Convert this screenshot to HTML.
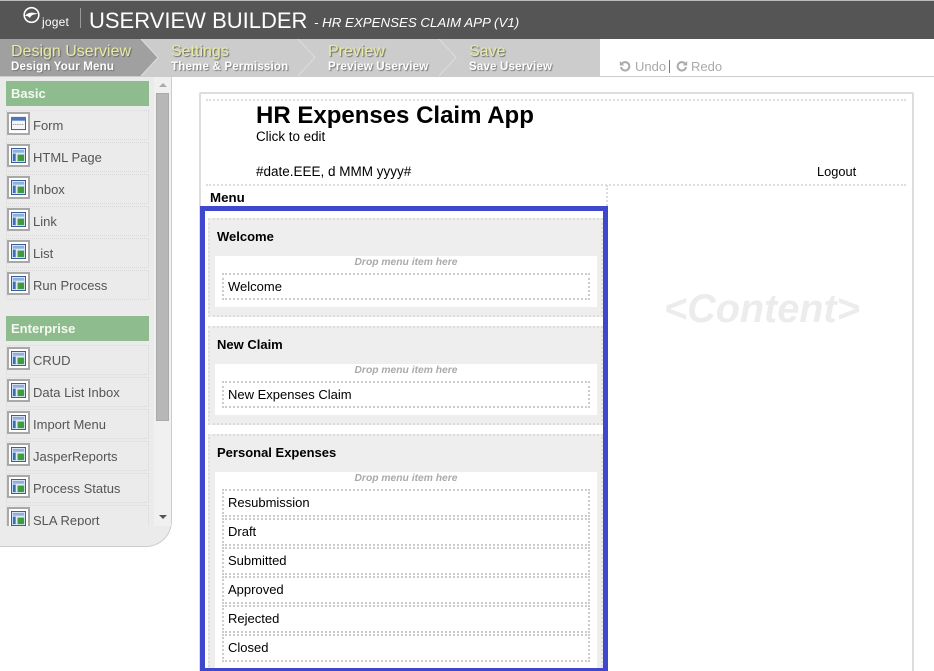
<!DOCTYPE html>
<html><head><meta charset="utf-8"><title>Userview Builder</title>
<style>
*{box-sizing:border-box}
html,body{margin:0;padding:0;background:#fff;width:934px;height:671px;overflow:hidden}
#w{position:relative;width:934px;height:671px;overflow:hidden;font-family:"Liberation Sans",Arial,sans-serif;color:#000;}
.a{position:absolute}
.t{position:absolute;white-space:nowrap}
.s1{position:absolute;top:42px;font-size:16px;line-height:20px;color:#e6eca0;text-shadow:1px 1px 1px #666;white-space:nowrap}
.s2{position:absolute;top:60px;font-size:11.5px;line-height:14px;font-weight:bold;color:#fff;text-shadow:1px 1px 1px #777;white-space:nowrap;letter-spacing:.2px}
.h{position:absolute;left:6px;width:143px;height:25px;background:#8fbc8f;color:#f4f8f0;font-weight:bold;font-size:13px;line-height:25px;padding-left:5px}
.i{position:absolute;left:6px;width:143px;height:30px;border:1px dotted #d8d8d8;}
.i span{position:absolute;left:26px;top:7px;font-size:13px;line-height:15px;color:#555;white-space:nowrap}
.ic{position:absolute;left:0;top:1px;width:23px;height:23px;border:2px solid #a8a8a8;background:#fff;}
.ic svg{position:absolute;left:2px;top:2px;display:block}
.sec{position:absolute;left:208px;width:395px;background:#eee;border:2px dotted #ddd}
.sec b{position:absolute;left:7px;top:9px;font-size:13px;line-height:15px;}
.in{position:absolute;left:215px;width:382px;background:#fff}
.dr{position:absolute;left:0;right:0;top:1px;text-align:center;font-size:10.3px;line-height:12px;font-weight:bold;font-style:italic;color:#aaa}
.m{position:absolute;left:222px;width:368px;height:27px;border:2px dotted #ccc;font-size:13px;line-height:23px;padding-left:4px}
</style></head><body>
<div id="w">

<svg width="0" height="0" style="position:absolute"><defs><g id="p"><rect x="3.500" y="3.500" width="15" height="15" fill="#dfe8f6" stroke="#2f5597"/><rect x="5" y="5" width="12" height="3" fill="#8fb0de"/><rect x="5" y="9" width="3" height="8" fill="#3d6fb5"/><rect x="10" y="10" width="7" height="7" fill="#3f9b3f"/></g></defs></svg>

<!-- header -->
<div class="a" style="left:0;top:0;width:934px;height:39px;background:#555;border-top:1px solid #bbb"></div>
<svg class="a" style="left:22px;top:6px" width="20" height="18" viewBox="0 0 20 18"><circle cx="9.500" cy="9" r="7.300" fill="none" stroke="#fff" stroke-width="1.600"/><path d="M3 10C6 6 11 6 16 8 12 8 9 9 8 12 6 10 5 10 3 10Z" fill="#fff"/></svg>
<div class="t" style="left:42px;top:15px;font-size:12px;line-height:14px;color:#fff;letter-spacing:.2px">joget</div>
<div class="a" style="left:80px;top:8px;width:1px;height:20px;background:#999"></div>
<div class="t" style="left:89px;top:7px;font-size:22px;line-height:28px;color:#fff">USERVIEW BUILDER</div>
<div class="t" style="left:314px;top:15px;font-size:13.3px;line-height:16px;font-style:italic;color:#fff">- HR EXPENSES CLAIM APP (V1)</div>

<!-- steps -->
<div class="a" style="left:0;top:39px;width:600px;height:37px;background:#ccc"></div>
<svg class="a" style="left:0;top:39px" width="600" height="37" viewBox="0 0 600 37">
<path d="M0 0H141L158 18.500L141 37H0Z" fill="#a0a0a0"/>
<path d="M141 0L158 18.500L141 37" fill="none" stroke="#ddd" stroke-width="1"/>
<path d="M298 0L315 18.500L298 37" fill="none" stroke="#ddd" stroke-width="1"/>
<path d="M439 0L456 18.500L439 37" fill="none" stroke="#ddd" stroke-width="1"/>
</svg>
<div class="a" style="left:0;top:76px;width:934px;height:1px;background:#ccc"></div>
<div class="s1" style="left:11px">Design Userview</div><div class="s2" style="left:11px">Design Your Menu</div>
<div class="s1" style="left:171px">Settings</div><div class="s2" style="left:171px">Theme &amp; Permission</div>
<div class="s1" style="left:328px">Preview</div><div class="s2" style="left:328px">Preview Userview</div>
<div class="s1" style="left:469px">Save</div><div class="s2" style="left:469px">Save Userview</div>

<svg class="a" style="left:619px;top:60px" width="12" height="12" viewBox="0 0 12 12"><path d="M3 3.500A4.200 4.200 0 1 1 2 7" fill="none" stroke="#aaa" stroke-width="2"/><path d="M.8 1V5.500H5.300Z" fill="#aaa"/></svg>
<div class="t" style="left:635px;top:59px;font-size:13px;line-height:15px;color:#aaa">Undo</div>
<div class="a" style="left:669px;top:60px;width:1px;height:13px;background:#a66"></div>
<svg class="a" style="left:676px;top:60px" width="12" height="12" viewBox="0 0 12 12"><path d="M9 3.500A4.200 4.200 0 1 0 10 7" fill="none" stroke="#aaa" stroke-width="2"/><path d="M11.200 1V5.500H6.700Z" fill="#aaa"/></svg>
<div class="t" style="left:691px;top:59px;font-size:13px;line-height:15px;color:#aaa">Redo</div>

<!-- sidebar -->
<div class="a" style="left:0;top:77px;width:172px;height:470px;background:#ebebeb;border-right:1px solid #ccc;border-bottom:1px solid #ccc;border-bottom-right-radius:26px"></div>
<div class="a" style="left:154px;top:77px;width:17px;height:449px;background:#f0f0f0"></div>
<div class="a" style="left:156px;top:93px;width:13px;height:328px;background:#b7b7b7;border:1px solid #aaa"></div>
<svg class="a" style="left:158px;top:82px" width="10" height="6"><path d="M1 5H9L5 1Z" fill="#aaa"/></svg>
<svg class="a" style="left:158px;top:514px" width="10" height="6"><path d="M1 1H9L5 5Z" fill="#555"/></svg>

<div class="a" style="left:0;top:77px;width:154px;height:449px;overflow:hidden">
  <div class="h" style="top:4px">Basic</div>
  <div class="i" style="top:33px"><div class="ic"><svg width="15" height="15" viewBox="3 3 16 16"><rect x="3.500" y="4.500" width="15" height="13" fill="#f4f6fb" stroke="#2f5597"/><rect x="3" y="4" width="16" height="4" fill="#4d76b8"/><path d="M5 12H17" stroke="#777" stroke-dasharray="1 1"/></svg></div><span>Form</span></div>
  <div class="i" style="top:65px"><div class="ic"><svg width="15" height="15" viewBox="3 3 16 16"><use href="#p"/></svg></div><span>HTML Page</span></div>
  <div class="i" style="top:97px"><div class="ic"><svg width="15" height="15" viewBox="3 3 16 16"><use href="#p"/></svg></div><span>Inbox</span></div>
  <div class="i" style="top:129px"><div class="ic"><svg width="15" height="15" viewBox="3 3 16 16"><use href="#p"/></svg></div><span>Link</span></div>
  <div class="i" style="top:161px"><div class="ic"><svg width="15" height="15" viewBox="3 3 16 16"><use href="#p"/></svg></div><span>List</span></div>
  <div class="i" style="top:193px"><div class="ic"><svg width="15" height="15" viewBox="3 3 16 16"><use href="#p"/></svg></div><span>Run Process</span></div>
  <div class="h" style="top:239px">Enterprise</div>
  <div class="i" style="top:268px"><div class="ic"><svg width="15" height="15" viewBox="3 3 16 16"><use href="#p"/></svg></div><span>CRUD</span></div>
  <div class="i" style="top:300px"><div class="ic"><svg width="15" height="15" viewBox="3 3 16 16"><use href="#p"/></svg></div><span>Data List Inbox</span></div>
  <div class="i" style="top:332px"><div class="ic"><svg width="15" height="15" viewBox="3 3 16 16"><use href="#p"/></svg></div><span>Import Menu</span></div>
  <div class="i" style="top:364px"><div class="ic"><svg width="15" height="15" viewBox="3 3 16 16"><use href="#p"/></svg></div><span>JasperReports</span></div>
  <div class="i" style="top:396px"><div class="ic"><svg width="15" height="15" viewBox="3 3 16 16"><use href="#p"/></svg></div><span>Process Status</span></div>
  <div class="i" style="top:428px"><div class="ic"><svg width="15" height="15" viewBox="3 3 16 16"><use href="#p"/></svg></div><span>SLA Report</span></div>
</div>

<!-- canvas -->
<div class="a" style="left:199px;top:92px;width:715px;height:600px;border:2px solid #ddd;border-radius:2px"></div>
<div class="a" style="left:206px;top:99px;width:700px;height:0;border-top:2px dotted #ddd"></div>
<div class="t" style="left:256px;top:102px;font-size:24px;line-height:28px;font-weight:bold">HR Expenses Claim App</div>
<div class="t" style="left:256px;top:129px;font-size:13.4px;line-height:16px">Click to edit</div>
<div class="t" style="left:256px;top:164px;font-size:13.5px;line-height:16px">#date.EEE, d MMM yyyy#</div>
<div class="t" style="left:817px;top:164px;font-size:12.8px;line-height:16px">Logout</div>
<div class="a" style="left:206px;top:184px;width:700px;height:0;border-top:2px dotted #ddd"></div>
<div class="t" style="left:210px;top:190px;font-size:13.3px;line-height:16px;font-weight:bold">Menu</div>
<div class="a" style="left:606px;top:185px;width:0;height:21px;border-left:2px dotted #ddd"></div>
<div class="t" style="left:664px;top:287px;font-size:39.600px;line-height:44px;font-weight:bold;font-style:italic;color:#ececec">&lt;Content&gt;</div>

<!-- sections -->
<div class="sec" style="top:218px;height:99px"><b>Welcome</b></div>
<div class="in" style="top:256px;height:51px"><div class="dr">Drop menu item here</div></div>
<div class="m" style="top:273px">Welcome</div>

<div class="sec" style="top:326px;height:99px"><b>New Claim</b></div>
<div class="in" style="top:364px;height:51px"><div class="dr">Drop menu item here</div></div>
<div class="m" style="top:381px">New Expenses Claim</div>

<div class="sec" style="top:434px;height:240px"><b>Personal Expenses</b></div>
<div class="in" style="top:472px;height:199px"><div class="dr">Drop menu item here</div></div>
<div class="m" style="top:489px;height:28px">Resubmission</div>
<div class="m" style="top:518px;height:28px">Draft</div>
<div class="m" style="top:547px;height:28px">Submitted</div>
<div class="m" style="top:576px;height:28px">Approved</div>
<div class="m" style="top:605px;height:28px">Rejected</div>
<div class="m" style="top:634px;height:28px">Closed</div>

<!-- highlight -->
<div class="a" style="left:200px;top:206px;width:408px;height:470px;border:5px solid #3f48cc"></div>
<div class="a" style="left:205px;top:668px;width:398px;height:3px;background:#3f48cc"></div>
</div>
</body></html>
